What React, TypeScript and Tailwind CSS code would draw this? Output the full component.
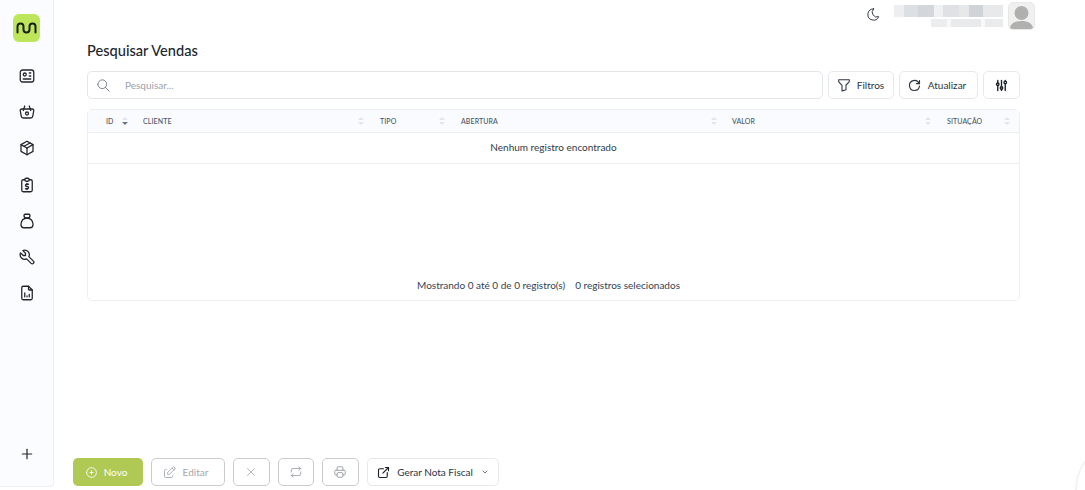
import React from 'react';
import {
  TbAdjustments,
  TbBasket,
  TbChevronDown,
  TbCirclePlus,
  TbEdit,
  TbExternalLink,
  TbFileAnalytics,
  TbFilter,
  TbId,
  TbMoneybag,
  TbMoon,
  TbPackage,
  TbPlus,
  TbPrinter,
  TbReload,
  TbRepeat,
  TbReportMoney,
  TbSearch,
  TbTool,
  TbX,
} from 'react-icons/tb';

const navIcons = [TbId, TbBasket, TbPackage, TbReportMoney, TbMoneybag, TbTool, TbFileAnalytics];

const columns = [
  { label: 'ID', width: 'w-[55px]', pad: 'pl-[18px] pr-[15px]', active: true },
  { label: 'CLIENTE', width: 'w-[237px]', pad: 'pr-[16px]' },
  { label: 'TIPO', width: 'w-[81px]', pad: 'pr-[16px]' },
  { label: 'ABERTURA', width: 'w-[271px]', pad: 'pr-[15px]' },
  { label: 'VALOR', width: 'w-[215px]', pad: 'pr-[16px]' },
  { label: 'SITUAÇÃO', width: 'w-[72px]', pad: 'pr-[9px]' },
];

const SortArrows = ({ active }: { active?: boolean }) => (
  <span className="flex flex-col gap-[2px]">
    <span className="h-0 w-0 border-x-[3px] border-b-[3px] border-x-transparent border-b-[#e2e5e9]" />
    <span className={`h-0 w-0 border-x-[3px] border-t-[3px] border-x-transparent ${active ? 'border-t-[#6b7280]' : 'border-t-[#e2e5e9]'}`} />
  </span>
);

const Logo = () => (
  <div className="flex h-[28px] w-[27px] items-center justify-center rounded-[6px] bg-[#bde65a]">
    <svg width="21" height="12" viewBox="0 0 21 12" fill="none" stroke="#1b1f1a" strokeWidth="2" strokeLinecap="round">
      <path d="M1.5 10.500V4.500a3 3 0 0 1 6 0V7.500a3 3 0 0 0 6 0V4.500a3 3 0 0 1 6 0V10.500" />
    </svg>
  </div>
);

const Blur = () => (
  <div className="mt-[3px] flex flex-col items-end gap-[2px] blur-[0.6px]">
    <div className="flex h-[12px] w-[109px]">
      <div className="w-[10px] bg-[#eceef0]" />
      <div className="w-[14px] bg-[#dcdfe3]" />
      <div className="w-[16px] bg-[#d3d6da]" />
      <div className="w-[9px] bg-[#f0f1f3]" />
      <div className="w-[16px] bg-[#dfe1e4]" />
      <div className="w-[10px] bg-[#e6e8ea]" />
      <div className="w-[14px] bg-[#d0d4d9]" />
      <div className="w-[20px] bg-[#e8e9eb]" />
    </div>
    <div className="flex h-[8px] w-[72px]">
      <div className="w-[16px] bg-[#ecedee]" />
      <div className="w-[4px] bg-[#f8f8f9]" />
      <div className="w-[30px] bg-[#e8eaec]" />
      <div className="w-[4px] bg-[#f8f8f9]" />
      <div className="w-[18px] bg-[#eaebed]" />
    </div>
  </div>
);

const OutlineButton = ({ className, children }: { className: string; children: React.ReactNode }) => (
  <button className={`flex h-[28px] items-center justify-center rounded-[5px] border bg-white ${className}`}>{children}</button>
);

export default function App() {
  return (
    <div className="relative flex h-[490px] w-[1085px] overflow-hidden bg-white font-['Lato',sans-serif] text-[#2b3440]">
      <aside className="flex h-[487px] w-[54px] shrink-0 flex-col items-center rounded-br-[4px] border-r border-b border-[#eceef1] bg-[#fbfcff] pt-[14px]">
        <Logo />
        <nav className="mt-[25px] flex flex-col items-center gap-[18.2px]">
          {navIcons.map((Icon, i) => (
            <Icon key={i} size={18} strokeWidth={1.7} className="text-[#22262b]" />
          ))}
        </nav>
        <TbPlus size={16} strokeWidth={1.8} className="mt-auto mb-[24px] text-[#22262b]" />
      </aside>

      <main className="flex h-[486px] flex-1 flex-col">
        <header className="flex h-[30px] items-start justify-end pr-[50px] pt-[2px]">
          <TbMoon size={15} strokeWidth={1.5} className="mr-[13px] mt-[5px] text-[#2a2f36]" />
          <Blur />
          <div className="ml-[5px] flex h-[28px] w-[27px] items-end justify-center overflow-hidden rounded-[5px] border border-[#e8e8e8] bg-[#f0f0f0]">
            <svg width="25" height="25" viewBox="0 0 25 25" fill="#b0b0ae">
              <circle cx="12.5" cy="9" r="7" />
              <path d="M1 25c0-5.500 5-8 11.500-8S24 19.500 24 25z" />
            </svg>
          </div>
        </header>

        <section className="w-[966px] pl-[33px]">
          <h1 className="mt-[11px] text-[14.6px] leading-[20px] font-medium text-[#20262e]">Pesquisar Vendas</h1>

          <div className="mt-[10px] flex h-[28px] gap-[5px]">
            <div className="flex w-[736px] items-center rounded-[5px] border border-[#e3e6ea] pl-[8px]">
              <TbSearch size={15} strokeWidth={1.4} className="text-[#6b7280]" />
              <span className="ml-[14px] text-[10px] text-[#9aa1ab]">Pesquisar...</span>
            </div>
            <OutlineButton className="w-[66px] gap-[5px] border-[#e6e8ec] pr-[2px] text-[10px]">
              <TbFilter size={16} strokeWidth={1.6} /> Filtros
            </OutlineButton>
            <OutlineButton className="w-[79px] gap-[6px] border-[#e6e8ec] pr-[4px] text-[10px]">
              <TbReload size={15} strokeWidth={1.8} /> Atualizar
            </OutlineButton>
            <OutlineButton className="w-[37px] border-[#e6e8ec]">
              <TbAdjustments size={15} strokeWidth={2.2} className="text-[#1d2229]" />
            </OutlineButton>
          </div>

          <div className="mt-[10px] flex h-[192px] flex-col rounded-[5px] border border-[#eceef1]">
            <table className="w-full table-fixed border-collapse">
              <thead>
                <tr className="h-[22px] border-b border-[#eceef1] bg-[#f9fbfe]">
                  {columns.map((col) => (
                    <th key={col.label} className={`${col.width} ${col.pad} p-0 font-medium`}>
                      <div className="flex items-center justify-between text-[7px] tracking-[0.1px] text-[#4b5563]">
                        <span>{col.label}</span>
                        <SortArrows active={col.active} />
                      </div>
                    </th>
                  ))}
                </tr>
              </thead>
              <tbody>
                <tr className="h-[31px] border-b border-[#eceef1]">
                  <td colSpan={6} className="text-center text-[10px] text-[#2f3a47]">
                    Nenhum registro encontrado
                  </td>
                </tr>
              </tbody>
            </table>
            <div className="mt-auto mb-[8px] flex justify-center gap-[10px] pr-[10px] text-[10px] leading-[14px] text-[#2f3f55]">
              <span>Mostrando 0 até 0 de 0 registro(s)</span>
              <span>0 registros selecionados</span>
            </div>
          </div>
        </section>

        <footer className="mt-auto flex gap-[8px] pl-[19px] text-[10px]">
          <button className="flex h-[28px] w-[70px] items-center justify-center gap-[6px] rounded-[5px] bg-[#afc954] pr-[4px] text-white">
            <TbCirclePlus size={13} strokeWidth={1.6} /> Novo
          </button>
          <OutlineButton className="w-[74px] gap-[6px] border-[#c9cbcf] pr-[6px] text-[#a3a7ad]">
            <TbEdit size={15} strokeWidth={1.4} /> Editar
          </OutlineButton>
          <OutlineButton className="w-[36.5px] border-[#c9cbcf] text-[#9a9ea5]">
            <TbX size={14} strokeWidth={1.3} />
          </OutlineButton>
          <OutlineButton className="w-[36.5px] border-[#c9cbcf] text-[#9a9ea5]">
            <TbRepeat size={14} strokeWidth={1.5} />
          </OutlineButton>
          <OutlineButton className="w-[36.5px] border-[#c9cbcf] text-[#8f939a]">
            <TbPrinter size={14} strokeWidth={1.5} />
          </OutlineButton>
          <OutlineButton className="w-[132px] gap-[6px] border-[#e6e8ec] text-[#2b3440]">
            <TbExternalLink size={15} strokeWidth={1.8} className="text-[#1d2229]" />
            Gerar Nota Fiscal
            <TbChevronDown size={8} className="ml-[2px]" />
          </OutlineButton>
        </footer>
      </main>

      <div className="absolute bottom-[-50px] right-[-90px] h-[100px] w-[100px] rounded-full border-2 border-[#f3f3f3]" />
    </div>
  );
}
